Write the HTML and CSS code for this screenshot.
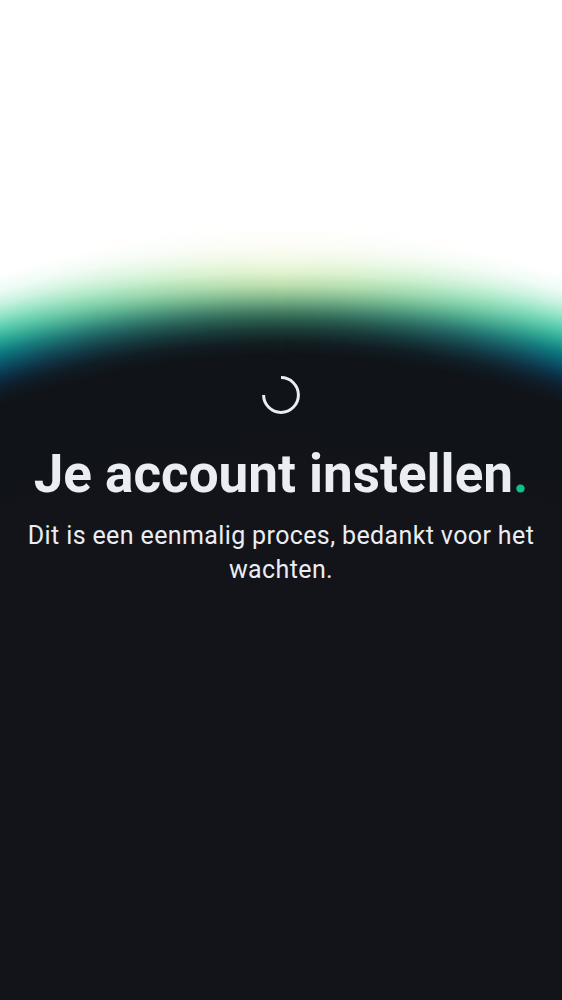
FILE: index.html
```html
<!DOCTYPE html>
<html lang="nl">
<head>
<meta charset="utf-8">
<title>Je account instellen</title>
<link rel="stylesheet" href="styles.css">
</head>
<body>
<main class="screen">
  <svg class="spinner" viewBox="0 0 38 38" aria-hidden="true"><path d="M19 1.6A17.4 17.4 0 1 1 1.6 19"/></svg>
  <h1 class="title">Je account instellen<span class="dot">.</span></h1>
  <p class="message">Dit is een eenmalig proces, bedankt voor het wachten.</p>
</main>
</body>
</html>
```
FILE: styles.css
```css
body {
  margin: 0;
  background: #131419;
  font-family: Roboto, sans-serif;
}

.screen {
  position: relative;
  isolation: isolate;
  box-sizing: border-box;
  height: 1000px;
  padding: 376px 20px 0;
  display: flex;
  flex-direction: column;
  align-items: center;
  overflow: hidden;
  color: #eaedf3;
  text-align: center;
}

/* Glowing horizon: a green centre that turns teal and blue at the sides */
.screen::before,
.screen::after {
  content: "";
  position: absolute;
  inset: 0;
  z-index: -2;
}

.screen::before {
  background: radial-gradient(circle at 281px 1203px,
    #131419 720px, #101318 780px, #101318 846px, #121d21 860px,
    #1b3d37 873px, #2d5e4e 883px, #467e64 891px, #7fb68a 904px, #9dca9b 910px,
    #bfe0b2 918px, #e3f4d0 931px, #f3fae6 943px, #fcfdf7 958px, #fff 978px);
}

.screen::after {
  z-index: -1;
  height: 430px;
  background: radial-gradient(circle at 281px 1203px,
    #10131800 846px, #10171f 853px, #0e202f 863px, #0c3048 872px,
    #0a4f66 883px, #0b7880 895px, #25a293 906px, #4fc6aa 917px,
    #8ae1c4 929px, #c4f1df 941px, #ecfbf5 954px, #fff 970px);
  mask-image: linear-gradient(90deg,
    #000, rgb(0 0 0 / .64) 12%, rgb(0 0 0 / .34) 25%, rgb(0 0 0 / .12) 37%, rgb(0 0 0 / .03) 45%, transparent 50%,
    rgb(0 0 0 / .03) 55%, rgb(0 0 0 / .12) 63%, rgb(0 0 0 / .34) 75%, rgb(0 0 0 / .64) 88%, #000);
}

.spinner {
  width: 38px;
  height: 38px;
  fill: none;
  stroke: #eaedf3;
  stroke-width: 3;
}

.title {
  margin: 29px 0 0;
  font-size: 53px;
  line-height: 62px;
  font-weight: 700;
  white-space: nowrap;
}

.dot {
  color: #0ac18e;
}

.message {
  margin: 14px 0 0;
  font-size: 25px;
  line-height: 34px;
  letter-spacing: 0.375px;
}
```
